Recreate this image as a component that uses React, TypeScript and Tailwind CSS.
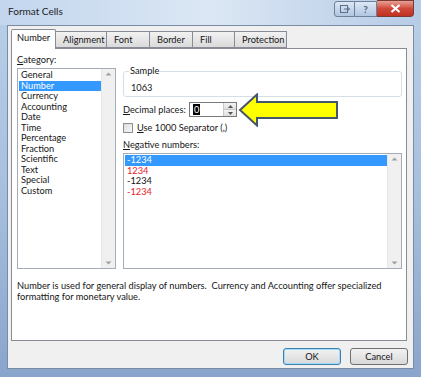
import React from 'react';

const categories = ['General', 'Number', 'Currency', 'Accounting', 'Date', 'Time', 'Percentage', 'Fraction', 'Scientific', 'Text', 'Special', 'Custom'];
const tabs = ['Number', 'Alignment', 'Font', 'Border', 'Fill', 'Protection'];
const tabWidths = ['w-[45px]', 'w-[51px]', 'w-[43px]', 'w-[43px]', 'w-[42px]', 'w-[52px]'];

const negatives = [
  { v: '-1234', c: 'text-white bg-[#3399ff]' },
  { v: '1234', c: 'text-[#e8202a]' },
  { v: '-1234', c: 'text-[#111]' },
  { v: '-1234', c: 'text-[#e8202a]' },
];

// thin win7 list scrollbar
const ScrollBar = () => (
  <div className="w-[14px] h-full bg-[#f0f0f0] border-l border-[#e6e6e6] flex flex-col justify-between items-center py-[3px]">
    <svg width="7" height="4" viewBox="0 0 7 4"><path d="M0.5 3.5 L3.5 0.5 L6.5 3.5 Z" fill="#a0a0a0" /></svg>
    <svg width="7" height="4" viewBox="0 0 7 4"><path d="M0.5 0.5 L3.5 3.5 L6.5 0.5 Z" fill="#a0a0a0" /></svg>
  </div>
);

const App: React.FC = () => {
  return (
    <div className="w-[421px] h-[377px] bg-gradient-to-b from-[#b9cfe9] via-[#a7c0de] to-[#8aa5cc] flex flex-col text-[#161616] font-['Lato',sans-serif] overflow-hidden whitespace-nowrap">

      {/* Title bar */}
      <div className="h-[25px] flex items-start shrink-0 bg-gradient-to-r from-[#c3d6ee] via-[#dbe7f4] to-[#b6cbe6]">
        <div className="pl-[8px] pt-[5px] text-[10px] leading-[13px] text-[#1b1b1b]">Format Cells</div>
        <div className="ml-auto mr-[7px] flex">
          <div className="w-[21px] h-[16px] mt-[1px] border border-[#6d7f99] rounded-l-[3px] bg-gradient-to-b from-[#dce8f5] to-[#b2c6e0] flex items-center justify-center">
            <svg width="10" height="8" viewBox="0 0 10 8"><rect x="0.5" y="0.5" width="7" height="7" fill="none" stroke="#5d6f88" /><path d="M4 4 H9.5 M7.5 2 L9.5 4 L7.5 6" stroke="#5d6f88" fill="none" /></svg>
          </div>
          <div className="w-[22px] h-[16px] mt-[1px] border border-l-0 border-[#6d7f99] bg-gradient-to-b from-[#dce8f5] to-[#b2c6e0] flex items-center justify-center text-[10px] font-bold text-[#4d5f79] leading-none">?</div>
          <div className="w-[37px] h-[17px] border border-l-0 border-[#7d3a35] rounded-br-[4px] bg-gradient-to-b from-[#e6a095] via-[#d0483a] to-[#c03020] flex items-center justify-center">
            <svg width="11" height="9" viewBox="0 0 11 9"><path d="M1.5 1 L9.5 8 M9.5 1 L1.5 8" stroke="#ffffff" strokeWidth="2.2" /></svg>
          </div>
        </div>
      </div>

      {/* Client area */}
      <div className="mx-[7px] h-[344px] bg-[#f0f0f0] border border-[#7b8ba3] flex flex-col">
        {/* tab strip */}
        <div className="flex items-end pl-[3px] pt-[2px] h-[22px] relative z-10">
          {tabs.map((t, i) => (
            <div
              key={t}
              className={
                i === 0
                  ? `${tabWidths[i]} h-[20px] bg-white border border-b-0 border-[#898c95] rounded-t-[2px] text-[9.25px] leading-[16px] pl-[5px] -mb-[1px]`
                  : `${tabWidths[i]} h-[17px] bg-gradient-to-b from-[#f2f2f2] to-[#dadada] border border-l-0 border-[#898c95] text-[9.25px] leading-[15px] pl-[7px] mb-0`
              }
            >
              {t}
            </div>
          ))}
        </div>

        {/* panel */}
        <div className="ml-[3px] w-[396px] h-[293px] bg-white border border-[#898c95] flex flex-col">
          <div className="flex pt-[5px] pl-[5px] gap-[7px]">
            {/* category column */}
            <div className="w-[99px] flex flex-col">
              <div className="text-[9.25px] leading-[12px] mb-[2px]"><span className="underline">C</span>ategory:</div>
              <div className="h-[201px] border border-[#a5acb5] bg-white flex">
                <div className="flex-1 pt-[1px] pl-[1px]">
                  {categories.map(c => (
                    <div
                      key={c}
                      className={`text-[9.25px] leading-[10.5px] h-[10.5px] pl-[2px] ${c === 'Number' ? 'bg-[#3399ff] text-white' : ''}`}
                    >
                      {c}
                    </div>
                  ))}
                </div>
                <ScrollBar />
              </div>
            </div>

            {/* right column */}
            <div className="w-[279px] flex flex-col">
              {/* Sample group */}
              <div className="mt-[17px] h-[26px] border border-[#d5dfe5] rounded-[3px] relative pl-[7px] pt-[10px]">
                <div className="absolute -top-[7px] left-[5px] px-[1px] bg-white text-[9.25px] leading-[12px]">Sample</div>
                <div className="text-[9.25px] leading-[12px]">1063</div>
              </div>

              {/* decimal places */}
              <div className="flex items-center mt-[5px] h-[15px] relative">
                <div className="text-[9.25px] leading-[12px] w-[66px]"><span className="underline">D</span>ecimal places:</div>
                <div className="w-[48px] h-[15px] border border-[#7a7a7a] bg-white flex">
                  <div className="flex-1 flex items-center pl-[3px]">
                    <span className="bg-black text-white text-[9.25px] leading-[11px] px-[1px]">0</span>
                  </div>
                  <div className="w-[13px] flex flex-col border-l border-[#c8c8c8]">
                    <div className="flex-1 bg-gradient-to-b from-[#f4f4f4] to-[#dedede] border-b border-[#c8c8c8] flex items-center justify-center">
                      <svg width="5" height="3" viewBox="0 0 5 3"><path d="M0 3 L2.5 0 L5 3 Z" fill="#555" /></svg>
                    </div>
                    <div className="flex-1 bg-gradient-to-b from-[#f4f4f4] to-[#dedede] flex items-center justify-center">
                      <svg width="5" height="3" viewBox="0 0 5 3"><path d="M0 0 L2.5 3 L5 0 Z" fill="#555" /></svg>
                    </div>
                  </div>
                </div>
                {/* yellow callout arrow */}
                <svg className="absolute left-[115px] -top-[9px]" width="102" height="34" viewBox="0 0 102 34">
                  <path d="M2 17 L19 1.5 L19 9 L99 9 L99 25 L19 25 L19 32.5 Z" fill="#ffff00" stroke="#44556e" strokeWidth="2" strokeLinejoin="miter" />
                </svg>
              </div>

              {/* separator checkbox */}
              <div className="flex items-center mt-[5px] h-[12px]">
                <div className="w-[10px] h-[10px] border border-[#8f8f8f] bg-gradient-to-br from-[#dcdcdc] to-[#f8f8f8]"></div>
                <div className="ml-[4px] text-[9.25px] leading-[12px]"><span className="underline">U</span>se 1000 Separator (,)</div>
              </div>

              {/* negative numbers */}
              <div className="mt-[5px] text-[9.25px] leading-[12px]"><span className="underline">N</span>egative numbers:</div>
              <div className="mt-[2px] h-[116px] border border-[#a5acb5] bg-white flex">
                <div className="flex-1 pt-[1px] pl-[1px]">
                  {negatives.map((n, i) => (
                    <div key={i} className={`text-[9.25px] leading-[10.5px] h-[10.5px] pl-[2px] ${n.c}`}>{n.v}</div>
                  ))}
                </div>
                <ScrollBar />
              </div>
            </div>
          </div>

          {/* description */}
          <div className="pl-[5px] mt-[11px] text-[9.25px] leading-[11px]">
            <div>Number is used for general display of numbers.&nbsp; Currency and Accounting offer specialized</div>
            <div>formatting for monetary value.</div>
          </div>
        </div>

        {/* buttons */}
        <div className="flex justify-end gap-[9px] pr-[5px] mt-[7px]">
          <div className="w-[58px] h-[17px] rounded-[3px] border border-[#3c7fb1] shadow-[inset_0_0_0_1px_#9fdcf5] bg-gradient-to-b from-[#f2f2f2] to-[#d9d9d9] text-[9.25px] leading-[15px] text-center">OK</div>
          <div className="w-[58px] h-[17px] rounded-[3px] border border-[#707070] bg-gradient-to-b from-[#f2f2f2] to-[#d9d9d9] text-[9.25px] leading-[15px] text-center">Cancel</div>
        </div>
      </div>
    </div>
  );
};

export default App;
